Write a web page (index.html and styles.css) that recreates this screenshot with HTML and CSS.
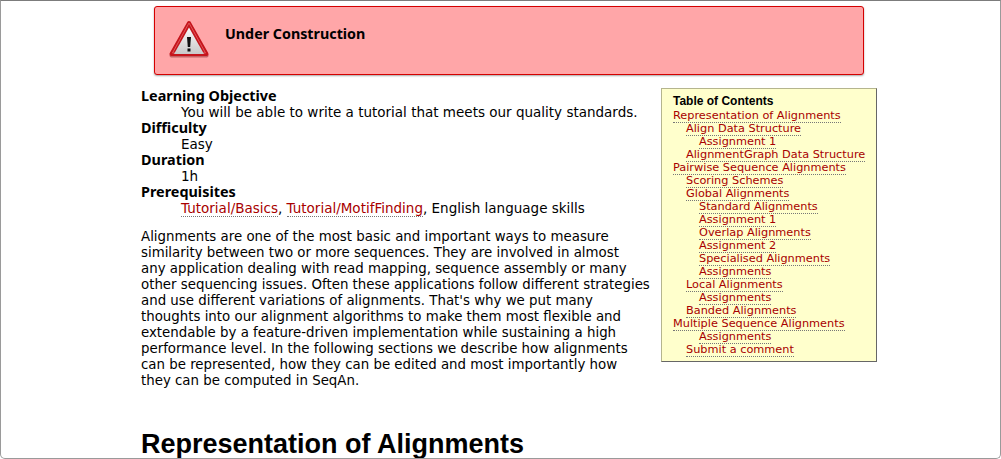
FILE: index.html
```html
<!DOCTYPE html>
<html lang="en">
<head>
<meta charset="utf-8">
<title>Alignments</title>
<link rel="stylesheet" href="styles.css">
</head>
<body>
<div class="window">
  <div class="page">
    <div class="callout">
      <svg class="warn-icon" width="44" height="44" viewBox="0 0 44 44" aria-hidden="true">
        <defs>
          <linearGradient id="warnfill" x1="0" y1="0" x2="0" y2="1">
            <stop offset="0" stop-color="#fafafa"/>
            <stop offset="1" stop-color="#c9c9c9"/>
          </linearGradient>
        </defs>
        <path d="M21 6.500 L38.500 37.500 H3.500 Z" fill="#7d1015" opacity=".45" stroke="#7d1015" stroke-width="4" stroke-linejoin="round" transform="translate(0 1)"/>
        <path d="M21 6 L38.500 37 H3.500 Z" fill="#b50d14" stroke="#c5151c" stroke-width="4" stroke-linejoin="round"/>
        <path d="M21 6 L37.500 36 H4.500 Z" fill="none" stroke="#e0565a" stroke-width="1" stroke-linejoin="round"/>
        <path d="M21 10.500 L36 37 H6 Z" fill="url(#warnfill)"/>
        <path d="M19 20 H23 L22.200 30 H19.800 Z" fill="#111"/>
        <rect x="19.500" y="31.500" width="3" height="3" fill="#111"/>
      </svg>
      <div class="callout-title">Under Construction</div>
    </div>
    <div class="content">
      <aside class="toc">
        <div class="toc-title">Table of Contents</div>
        <ul class="toc-list">
          <li><a href="#">Representation of Alignments</a></li>
          <li class="l2"><a href="#">Align Data Structure</a></li>
          <li class="l3"><a href="#">Assignment 1</a></li>
          <li class="l2"><a href="#">AlignmentGraph Data Structure</a></li>
          <li><a href="#">Pairwise Sequence Alignments</a></li>
          <li class="l2"><a href="#">Scoring Schemes</a></li>
          <li class="l2"><a href="#">Global Alignments</a></li>
          <li class="l3"><a href="#">Standard Alignments</a></li>
          <li class="l3"><a href="#">Assignment 1</a></li>
          <li class="l3"><a href="#">Overlap Alignments</a></li>
          <li class="l3"><a href="#">Assignment 2</a></li>
          <li class="l3"><a href="#">Specialised Alignments</a></li>
          <li class="l3"><a href="#">Assignments</a></li>
          <li class="l2"><a href="#">Local Alignments</a></li>
          <li class="l3"><a href="#">Assignments</a></li>
          <li class="l2"><a href="#">Banded Alignments</a></li>
          <li><a href="#">Multiple Sequence Alignments</a></li>
          <li class="l3"><a href="#">Assignments</a></li>
          <li class="l2"><a href="#">Submit a comment</a></li>
        </ul>
      </aside>
      <dl class="meta">
        <dt>Learning Objective</dt>
        <dd>You will be able to write a tutorial that meets our quality standards.</dd>
        <dt>Difficulty</dt>
        <dd>Easy</dd>
        <dt>Duration</dt>
        <dd>1h</dd>
        <dt>Prerequisites</dt>
        <dd><a href="#">Tutorial/Basics</a>, <a href="#">Tutorial/MotifFinding</a>, English language skills</dd>
      </dl>
      <p class="intro">Alignments are one of the most basic and important ways to measure<br>
similarity between two or more sequences. They are involved in almost<br>
any application dealing with read mapping, sequence assembly or many<br>
other sequencing issues. Often these applications follow different strategies<br>
and use different variations of alignments. That's why we put many<br>
thoughts into our alignment algorithms to make them most flexible and<br>
extendable by a feature-driven implementation while sustaining a high<br>
performance level. In the following sections we describe how alignments<br>
can be represented, how they can be edited and most importantly how<br>
they can be computed in SeqAn.</p>
      <h1 class="heading">Representation of Alignments</h1>
    </div>
  </div>
</div>
</body>
</html>
```
FILE: styles.css
```css
html, body {
  margin: 0;
  padding: 0;
  height: 100%;
  overflow: hidden;
  background: #fff;
}
.window {
  box-sizing: border-box;
  height: 459px;
  border: 1px solid #9a9a9a;
  border-top-color: #7c7c7c;
  border-bottom-left-radius: 5px;
  border-bottom-right-radius: 5px;
  overflow: hidden;
  background: #fff;
}
.page {
  width: 736px;
  margin-left: 140px;
  font-family: "DejaVu Sans", Verdana, sans-serif;
  font-size: 13.5px;
  line-height: 16px;
  color: #000;
}
a {
  color: #a80000;
  text-decoration: none;
  border-bottom: 1px dotted #777;
}
.callout {
  display: flex;
  box-sizing: border-box;
  width: 710px;
  height: 69px;
  margin: 5px 0 0 13px;
  padding: 10px 13px 0;
  background: #ffa6a8;
  border: 1px solid #d40000;
  border-radius: 3px;
  box-shadow: 0 1px 2px rgba(0,0,0,.35);
}
.warn-icon {
  flex: none;
}
.callout-title {
  margin: 9px 0 0 13px;
  font-family: "Noto Sans", "DejaVu Sans", sans-serif;
  font-weight: bold;
  font-size: 14.3px;
}
.content {
  margin-top: 13px;
}
.toc {
  float: right;
  box-sizing: border-box;
  width: 216px;
  height: 274px;
  margin: 0 0 10px 4px;
  padding: 5px 11px 6px;
  background: #ffffcc;
  border: 1px solid #b5b58e;
  border-right-color: #666;
  border-bottom-color: #666;
  font-size: 11.3px;
  line-height: 13px;
}
.toc-title {
  font-family: "Liberation Sans", Arial, sans-serif;
  font-size: 12px;
  line-height: 15px;
  font-weight: bold;
}
.toc-list {
  list-style: none;
  margin: 0;
  padding: 0;
  white-space: nowrap;
}
.toc-list a {
  color: #a80000;
}
.l2 { padding-left: 13px; }
.l3 { padding-left: 26px; }
.meta {
  margin: 0;
}
.meta dt {
  font-family: "Noto Sans", "DejaVu Sans", sans-serif;
  font-weight: bold;
  font-size: 14.4px;
}
.meta dd {
  margin: 0 0 0 40px;
}
.intro {
  margin: 13px 0 0;
  font-size: 13.35px;
}
.heading {
  margin: 40px 0 0;
  font-family: "Liberation Sans", Arial, sans-serif;
  font-size: 27px;
  line-height: 30px;
  font-weight: bold;
  white-space: nowrap;
}
```
